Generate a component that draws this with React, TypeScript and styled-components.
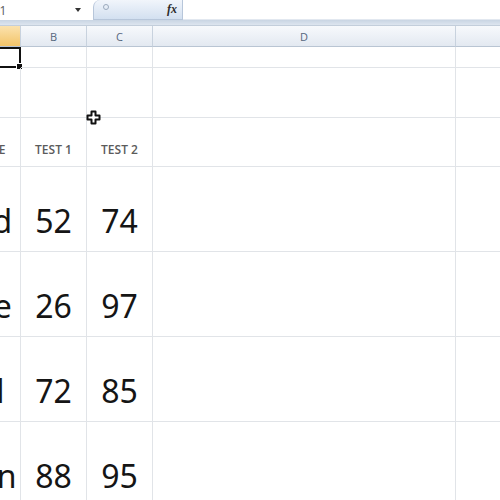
import styled, { createGlobalStyle } from "styled-components";

const GlobalStyle = createGlobalStyle`
  html, body {
    margin: 0;
    padding: 0;
    background: #ffffff;
  }
  body {
    font-family: "Noto Sans", "Open Sans", sans-serif;
  }
`;

const Window = styled.div`
  width: 500px;
  height: 500px;
  overflow: hidden;
  display: flex;
  flex-direction: column;
  background: #ffffff;
`;

const FormulaBar = styled.div`
  height: 20px;
  display: flex;
  align-items: stretch;
  background: #ffffff;
  flex-shrink: 0;
`;

const NameBox = styled.div`
  width: 100px;
  margin-left: -11px;
  display: flex;
  align-items: center;
  justify-content: space-between;
  padding: 0 8px 0 3px;
  box-sizing: border-box;
  font-family: "Open Sans", sans-serif;
  font-size: 12px;
  color: #5a5a5a;
`;

const DropArrow = styled.span`
  width: 0;
  height: 0;
  border-left: 3px solid transparent;
  border-right: 3px solid transparent;
  border-top: 4px solid #333;
`;

const FxBox = styled.div`
  width: 90px;
  margin-left: 4px;
  border-radius: 7px 0 0 0;
  border: 1px solid #b7c6da;
  border-top: none;
  background: linear-gradient(#f1f5fb, #d3e0f0);
  display: flex;
  align-items: center;
  justify-content: space-between;
  padding: 0 5px 0 9px;
  box-sizing: border-box;
`;

const Expander = styled.span`
  width: 4px;
  height: 4px;
  border-radius: 50%;
  border: 1px solid #9aa9bc;
  margin-top: -6px;
`;

const Fx = styled.span`
  font-family: "Liberation Serif", serif;
  font-style: italic;
  font-weight: bold;
  font-size: 12px;
  color: #2b2b2b;
`;

const FormulaInput = styled.div`
  flex: 1;
  border-bottom: 1px solid #e2e8f0;
`;

const Band = styled.div`
  height: 5px;
  flex-shrink: 0;
  background: linear-gradient(#c9d5e3, #dde5ef);
  border-bottom: 1px solid #c3cedb;
`;

const Sheet = styled.div`
  position: relative;
  flex: 1;
  overflow: hidden;
`;

// column A is scrolled mostly out of view
const Grid = styled.div`
  display: grid;
  margin-left: -44px;
  grid-template-columns: 65px 66px 66px 303px 100px;
  grid-template-rows: 21px 21px 50px 49px 85px 85px 85px 85px;
`;

const ColHead = styled.div<{ $active?: boolean }>`
  display: flex;
  align-items: center;
  justify-content: center;
  font-family: "Open Sans", sans-serif;
  font-size: 11px;
  color: #56677d;
  border-right: 1px solid #c8d2de;
  border-bottom: 1px solid #b9c5d3;
  background: ${(p) =>
    p.$active
      ? "linear-gradient(#fbe2ae, #f3c468)"
      : "linear-gradient(#f7f9fc, #e3e9f1)"};
`;

const Cell = styled.div<{ $selected?: boolean; $align?: "left" | "center" }>`
  position: relative;
  box-sizing: border-box;
  display: flex;
  align-items: flex-end;
  justify-content: ${(p) => (p.$align === "left" ? "flex-start" : "center")};
  border-right: 1px solid #e1e4e8;
  border-bottom: 1px solid #e1e4e8;
  padding: 0 3px;
  white-space: nowrap;
  ${(p) =>
    p.$selected &&
    `
    border: 2px solid #111;
    border-left: none;
    &::after {
      content: "";
      position: absolute;
      right: -4px;
      bottom: -4px;
      width: 5px;
      height: 5px;
      background: #111;
      border: 1px solid #fff;
    }
  `}
`;

const Label = styled.span`
  font-family: "Open Sans", sans-serif;
  font-size: 12px;
  font-weight: 600;
  color: #5b5b5b;
  padding-bottom: 8px;
`;

const Value = styled.span`
  font-family: "Noto Sans", sans-serif;
  font-size: 32px;
  color: #151515;
  line-height: 1;
  padding-bottom: 14px;
`;

const Cursor = styled.svg`
  position: absolute;
  left: 86px;
  top: 84px;
`;

const rows = [
  { name: "Ted", t1: 52, t2: 74 },
  { name: "Lee", t1: 26, t2: 97 },
  { name: "Bill", t1: 72, t2: 85 },
  { name: "Ken", t1: 88, t2: 95 },
];

export default function App() {
  return (
    <>
      <GlobalStyle />
      <Window>
        <FormulaBar>
          <NameBox>
            <span>A1</span>
            <DropArrow />
          </NameBox>
          <FxBox>
            <Expander />
            <Fx>fx</Fx>
          </FxBox>
          <FormulaInput />
        </FormulaBar>
        <Band />
        <Sheet>
          <Grid>
            <ColHead $active>A</ColHead>
            <ColHead>B</ColHead>
            <ColHead>C</ColHead>
            <ColHead>D</ColHead>
            <ColHead>E</ColHead>

            <Cell $selected />
            <Cell />
            <Cell />
            <Cell />
            <Cell />

            <Cell />
            <Cell />
            <Cell />
            <Cell />
            <Cell />

            <Cell>
              <Label>NAME</Label>
            </Cell>
            <Cell>
              <Label>TEST 1</Label>
            </Cell>
            <Cell>
              <Label>TEST 2</Label>
            </Cell>
            <Cell />
            <Cell />

            {rows.map((r) => (
              <>
                <Cell key={r.name + "n"} $align="left">
                  <Value>{r.name}</Value>
                </Cell>
                <Cell key={r.name + "1"}>
                  <Value>{r.t1}</Value>
                </Cell>
                <Cell key={r.name + "2"}>
                  <Value>{r.t2}</Value>
                </Cell>
                <Cell key={r.name + "d"} />
                <Cell key={r.name + "e"} />
              </>
            ))}
          </Grid>
          <Cursor width="15" height="15" viewBox="0 0 15 15">
            <path
              d="M5.5 1.5h4v4h4v4h-4v4h-4v-4h-4v-4h4z"
              fill="#fff"
              stroke="#111"
              strokeWidth="2"
              strokeLinejoin="round"
            />
          </Cursor>
        </Sheet>
      </Window>
    </>
  );
}
